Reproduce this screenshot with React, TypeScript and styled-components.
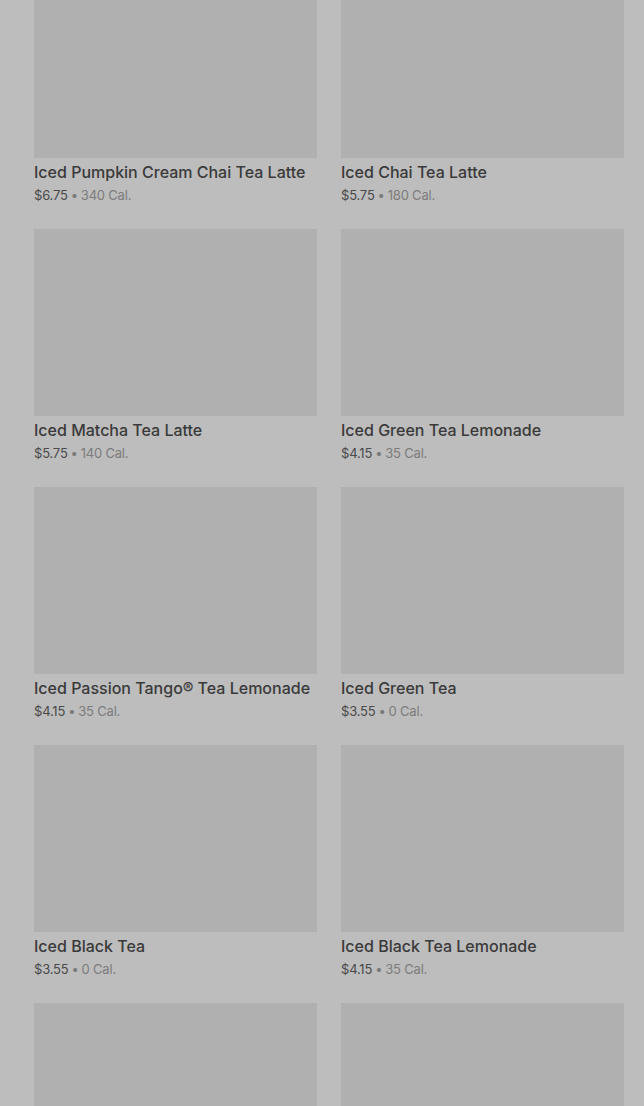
import React from "react";
import styled, { createGlobalStyle } from "styled-components";

const GlobalStyle = createGlobalStyle`
  html, body {
    margin: 0;
    padding: 0;
    background: #bdbdbd;
    overflow: hidden;
  }
  body {
    font-family: "Inter", "Liberation Sans", sans-serif;
  }
`;

const Page = styled.div`
  width: 644px;
  height: 1106px;
  overflow: hidden;
  background: #bdbdbd;
`;

const Grid = styled.div`
  display: grid;
  grid-template-columns: 283px 283px;
  column-gap: 24px;
  row-gap: 25px;
  padding: 0 20px 0 34px;
  margin-top: -29px;
`;

const Card = styled.div`
  display: flex;
  flex-direction: column;
`;

const Thumb = styled.div`
  height: 187px;
  background: #b0b0b0;
`;

const Name = styled.div`
  margin-top: 3px;
  font-size: 16px;
  line-height: 22px;
  font-weight: 500;
  color: #3a3a3a;
  white-space: nowrap;
`;

const Meta = styled.div`
  margin-top: 3px;
  font-size: 13px;
  line-height: 18px;
  color: #4a4a4a;
  letter-spacing: -0.2px;
  height: 18px;

  .dot {
    color: #7a7a7a;
    margin: 0 3px;
  }

  .cal {
    color: #7c7c7c;
  }
`;

type Drink = { name: string; price?: string; cal?: string };

const drinks: Drink[] = [
  { name: "Iced Pumpkin Cream Chai Tea Latte", price: "$6.75", cal: "340 Cal." },
  { name: "Iced Chai Tea Latte", price: "$5.75", cal: "180 Cal." },
  { name: "Iced Matcha Tea Latte", price: "$5.75", cal: "140 Cal." },
  { name: "Iced Green Tea Lemonade", price: "$4.15", cal: "35 Cal." },
  { name: "Iced Passion Tango® Tea Lemonade", price: "$4.15", cal: "35 Cal." },
  { name: "Iced Green Tea", price: "$3.55", cal: "0 Cal." },
  { name: "Iced Black Tea", price: "$3.55", cal: "0 Cal." },
  { name: "Iced Black Tea Lemonade", price: "$4.15", cal: "35 Cal." },
  { name: "" },
  { name: "" },
];

const App = () => {
  return (
    <Page>
      <GlobalStyle />
      <Grid>
        {drinks.map((d, i) => (
          <Card key={i}>
            <Thumb />
            {d.price && (
              <>
                <Name>{d.name}</Name>
                <Meta>
                  {d.price}
                  <span className="dot">•</span>
                  <span className="cal">{d.cal}</span>
                </Meta>
              </>
            )}
          </Card>
        ))}
      </Grid>
    </Page>
  );
};

export default App;
